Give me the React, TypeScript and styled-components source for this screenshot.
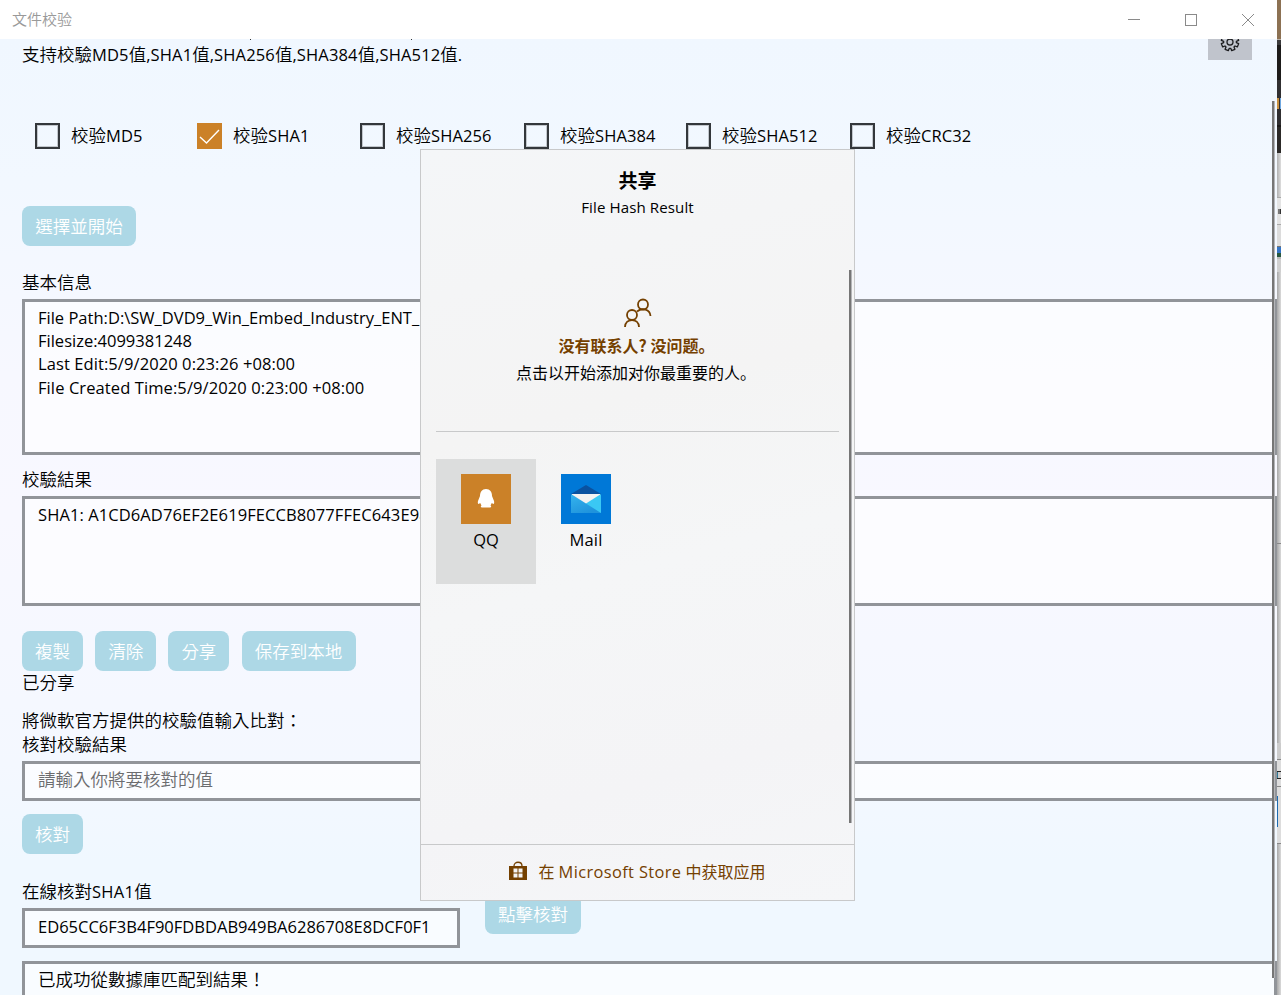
import React from 'react';
import styled, { createGlobalStyle } from 'styled-components';

const Global = createGlobalStyle`
  * { box-sizing: border-box; }
  body { margin: 0; overflow: hidden; }
`;

const Screen = styled.div`
  position: relative;
  display: flex;
  width: 1281px;
  height: 995px;
  overflow: hidden;
  font-family: "Open Sans", "Noto Sans CJK TC", sans-serif;
  font-size: 17.5px;
  color: #000;
`;
const Window = styled.main`
  width: 1277px;
  height: 995px;
  display: flex;
  flex-direction: column;
`;
const TitleBar = styled.header`
  height: 39px;
  flex: none;
  background: #fff;
  display: flex;
  align-items: center;
  justify-content: space-between;
  padding: 0 22px 2px 12px;
  font-family: "Noto Sans CJK SC", sans-serif;
  font-weight: 350;
  font-size: 15px;
  color: #999;
`;
const Controls = styled.div`
  display: flex;
  gap: 43px;
  svg { display: block; }
`;
const Page = styled.section`
  position: relative;
  flex: 1;
  min-height: 0;
  overflow: hidden;
  padding-left: 22px;
  display: flex;
  flex-direction: column;
  background: linear-gradient(to bottom, #f0f7ff 0%, #f2f8ff 15%, #f7f8ff 35%, #f8f8ff 50%, #f4f8ff 76%, #f0f8ff 86%, #f0f8ff 100%);
`;
const Intro = styled.div`
  flex: none;
  display: flex;
  justify-content: space-between;
  align-items: flex-start;
  height: 84px;
  padding-right: 25px;
`;
const Line = styled.div<{ $mt?: number; $h?: number }>`
  flex: none;
  margin-top: ${p => p.$mt ?? 0}px;
  height: ${p => p.$h ?? 24}px;
  line-height: ${p => (p.$h ?? 24) - 1}px;
  white-space: nowrap;
  font-weight: 350;
`;
const Latin = styled.span<{ $ls?: number; $size?: string }>`
  font-family: "Open Sans", sans-serif;
  font-weight: 400;
  font-size: ${p => p.$size ?? '0.945em'};
  letter-spacing: ${p => p.$ls ?? 0}px;
`;
const GearButton = styled.button`
  width: 44px;
  height: 21px;
  padding: 0;
  border: 0;
  background: #c0c4cc;
  overflow: hidden;
  svg { display: block; }
`;
const Checks = styled.div`
  flex: none;
  display: grid;
  grid-template-columns: 162px 163px 164px 162px 164px 162px;
  height: 26px;
  padding-left: 13px;
  font-family: "Noto Sans CJK SC", sans-serif;
`;
const Check = styled.label`
  display: flex;
  align-items: center;
  gap: 11px;
  height: 26px;
  white-space: nowrap;
  line-height: 24px;
  font-weight: 350;
  > span:last-child { padding-bottom: 2px; }
`;
const Box = styled.span<{ $on?: boolean }>`
  width: 25px;
  height: 26px;
  border: ${p => (p.$on ? '0' : '2px solid #33373b')};
  box-shadow: ${p => (p.$on ? 'none' : 'inset 0 0 0 1px #c2c7cd')};
  background: ${p => (p.$on ? '#cb8128' : 'transparent')};
  svg { display: block; }
`;
const Button = styled.button<{ $w: number }>`
  flex: none;
  width: ${p => p.$w}px;
  height: 40px;
  padding: 0;
  border: 0;
  border-radius: 8px;
  background: #add8e6;
  color: #fff;
  font: 350 17.5px/40px "Noto Sans CJK TC", sans-serif;
`;
const Row = styled.div<{ $mt: number }>`
  flex: none;
  display: flex;
  gap: 12.2px;
  margin-top: ${p => p.$mt}px;
`;
const Field = styled.div<{ $h: number; $mt: number; $muted?: boolean }>`
  flex: none;
  height: ${p => p.$h}px;
  margin-top: ${p => p.$mt}px;
  padding: 4px 13px;
  border: 3px solid #919499;
  background: rgba(255, 255, 255, 0.6);
  color: ${p => (p.$muted ? '#6b6c6f' : '#000')};
  line-height: 23.2px;
  white-space: nowrap;
  font-weight: 350;
  overflow: hidden;
`;
const OnlineRow = styled.div`
  flex: none;
  display: flex;
  gap: 25px;
  align-items: flex-start;
  margin-top: 26px;
`;
const OnlineColumn = styled.div`
  width: 438px;
`;
const OnlineButton = styled(Button)`
  margin-top: 14px;
`;
const Scrollbar = styled.div<{ $x: number; $y: number; $h: number }>`
  position: absolute;
  left: ${p => p.$x}px;
  top: ${p => p.$y}px;
  width: 3px;
  height: ${p => p.$h}px;
  background: linear-gradient(to right, #767676 2px, #b4b5b8 2px);
`;
const Descender = styled.i<{ $x: number }>`
  position: absolute;
  left: ${p => p.$x}px;
  top: 0;
  width: 1px;
  height: 1px;
  background: #333;
`;
const Desktop = styled.aside`
  width: 4px;
  display: flex;
  flex-direction: column;
`;
const Strip = styled.div<{ $h: number; $c: string }>`
  flex: none;
  height: ${p => p.$h}px;
  background: ${p => p.$c};
`;
const Dialog = styled.section`
  position: absolute;
  left: 420px;
  top: 149px;
  width: 435px;
  height: 752px;
  border: 1px solid #c8c9ca;
  background: linear-gradient(165deg, #f4f6f8, #f4f4f4 35%, #f5f6f7 55%, #f4f4f6 80%, #f5f6f8);
  display: flex;
  flex-direction: column;
  align-items: center;
  font-family: "Open Sans", "Noto Sans CJK SC", sans-serif;
  font-size: 16px;
`;
const DialogTitle = styled.h2`
  margin: 16px 0 0;
  font: 700 19px/28px "Noto Sans CJK SC", sans-serif;
`;
const Subtitle = styled.div`
  height: 26px;
  line-height: 26px;
`;
const People = styled.svg`
  margin: 78px 0 0 0;
  flex: none;
`;
const ContactTitle = styled.div`
  margin-top: 4px;
  height: 26px;
  font: 700 16px/26px "Noto Sans CJK SC", sans-serif;
  color: #744000;
  white-space: pre;
  padding-right: 2px;
`;
const ContactHint = styled.div`
  height: 28px;
  padding-right: 3px;
  font: 400 16px/28px "Noto Sans CJK SC", sans-serif;
`;
const Divider = styled.div`
  width: 403px;
  height: 1px;
  margin-top: 45px;
  background: #c8c9ca;
`;
const Targets = styled.div`
  display: flex;
  align-self: flex-start;
  margin: 27px 0 0 15px;
`;
const Target = styled.div<{ $active?: boolean }>`
  width: 100px;
  height: 125px;
  padding-top: 15px;
  display: flex;
  flex-direction: column;
  align-items: center;
  line-height: 32px;
  background: ${p => (p.$active ? '#dcdddd' : 'transparent')};
  svg { display: block; }
`;
const Footer = styled.footer`
  margin-top: auto;
  width: 100%;
  height: 56px;
  padding-bottom: 3px;
  border-top: 1px solid #c8c9ca;
  display: flex;
  align-items: center;
  justify-content: center;
  gap: 11px;
  color: #744000;
  white-space: nowrap;
  svg { margin-top: -1px; }
`;

const checks = [
  ['MD5', false], ['SHA1', true], ['SHA256', false],
  ['SHA384', false], ['SHA512', false], ['CRC32', false],
] as const;

const gearPath = () => {
  const pts: string[] = [];
  for (let i = 0; i < 8; i++) {
    const base = (i * Math.PI) / 4 + Math.PI / 8;
    [[-0.28, 6.4], [-0.2, 8.8], [0.2, 8.8], [0.28, 6.4]].forEach(([a, r]) => {
      pts.push(`${(r * Math.cos(base + a)).toFixed(2)} ${(r * Math.sin(base + a)).toFixed(2)}`);
    });
  }
  return `M${pts.join('L')}Z`;
};

const strips: [number, string][] = [
  [39, '#8c7153'], [1, '#b8b0a8'], [5, '#3a3a3c'], [35, '#1d1b1a'], [18, '#302f31'],
  [11, 'linear-gradient(to right,#c89040 2px,#302f31 2px,#302f31 3px,#70a8e0 3px)'], [16, '#302f31'], [2, '#1d1b1a'], [26, '#2c2a28'],
  [44, 'linear-gradient(to right,#b0b0b0,#dedede)'], [1, '#aaa'], [11, '#e4e4e4'],
  [5, 'linear-gradient(to right,#e4e4e4 1px,#777 1px,#777 3px,#333 3px)'], [10, '#e4e4e4'], [1, '#aaa'],
  [21, '#dcdcdc'], [1, '#777'], [6, '#3575c5'], [4, '#285840'], [2, '#bbb'], [13, '#d0d0d0'],
  [271, 'linear-gradient(to right,#a8a8a8,#dadada)'], [1, '#888'], [199, 'linear-gradient(to right,#a8a8a8,#dadada)'],
  [16, '#ccc'], [1, '#888'], [11, '#ddd'], [1, '#222'], [6, 'linear-gradient(to right,#317a98 1px,#ccc 1px)'], [1, '#222'], [7, '#ddd'], [1, '#888'],
  [9, '#ddd'], [31, 'linear-gradient(to right,#1d6bb0 1px,#ddd 1px)'], [16, '#ddd'], [1, '#888'],
  [160, 'linear-gradient(to right,#a8a8a8,#dadada)'],
];

export default function App() {
  return (
    <Screen>
      <Global />
      <Window>
        <TitleBar>
          <span>文件校验</span>
          <Controls>
            <svg width="14" height="14"><path d="M1 7.5h12" stroke="#8a8a8a" /></svg>
            <svg width="14" height="14"><rect x="1.5" y="2.5" width="11" height="11" fill="none" stroke="#8a8a8a" /></svg>
            <svg width="14" height="14"><path d="M1 2l12 12M13 2L1 14" stroke="#8a8a8a" /></svg>
          </Controls>
        </TitleBar>
        <Page>
          <Descender $x={250} />
          <Descender $x={411} />
          <Intro>
            <Line $mt={4}>
              支持校驗<Latin $ls={0.13}>MD5</Latin>值<Latin $ls={0.13}>,SHA1</Latin>值<Latin $ls={0.13}>,SHA256</Latin>值<Latin $ls={0.13}>,SHA384</Latin>值<Latin $ls={0.13}>,SHA512</Latin>值<Latin>.</Latin>
            </Line>
            <GearButton aria-label="設置">
              <svg width="44" height="21" viewBox="-22 -3 44 21" fill="none" stroke="#1c1d1f" strokeWidth="1.3">
                <path d={gearPath()} strokeLinejoin="round" />
                <circle r="3" />
              </svg>
            </GearButton>
          </Intro>
          <Checks>
            {checks.map(([name, on]) => (
              <Check key={name}>
                <Box $on={on}>
                  {on && <svg width="25" height="26"><path d="M3 14l6.500 6L22 7" fill="none" stroke="#fff" strokeWidth="1.4" /></svg>}
                </Box>
                <span>校验<Latin $ls={0.1}>{name}</Latin></span>
              </Check>
            ))}
          </Checks>
          <Row $mt={57}><Button $w={114}>選擇並開始</Button></Row>
          <Line $mt={25}>基本信息</Line>
          <Field $h={156} $mt={4}>
            <Latin as="div">File Path:D:\SW_DVD9_Win_Embed_Industry_ENT_LTSC</Latin>
            <Latin as="div">Filesize:4099381248</Latin>
            <Latin as="div" $ls={0.08}>Last Edit:5/9/2020 0:23:26 +08:00</Latin>
            <Latin as="div" $ls={0.09}>File Created Time:5/9/2020 0:23:00 +08:00</Latin>
          </Field>
          <Line $mt={13}>校驗結果</Line>
          <Field $h={110} $mt={4}><Latin as="div" $ls={0.08}>SHA1: A1CD6AD76EF2E619FECCB8077FFEC643E98</Latin></Field>
          <Row $mt={25}>
            <Button $w={61}>複製</Button>
            <Button $w={61}>清除</Button>
            <Button $w={61}>分享</Button>
            <Button $w={114}>保存到本地</Button>
          </Row>
          <Line>已分享</Line>
          <Line $mt={14}>將微軟官方提供的校驗值輸入比對：</Line>
          <Line>核對校驗結果</Line>
          <Field $h={40} $mt={4} $muted>請輸入你將要核對的值</Field>
          <Row $mt={13}><Button $w={61}>核對</Button></Row>
          <OnlineRow>
            <OnlineColumn>
              <Line>在線核對<Latin $ls={0.3}>SHA1</Latin>值</Line>
              <Field $h={40} $mt={4}><Latin as="div">ED65CC6F3B4F90FDBDAB949BA6286708E8DCF0F1</Latin></Field>
            </OnlineColumn>
            <OnlineButton $w={96}>點擊核對</OnlineButton>
          </OnlineRow>
          <Field $h={60} $mt={13}>已成功從數據庫匹配到結果！</Field>
          <Scrollbar $x={1272} $y={62} $h={877} />
        </Page>
      </Window>
      <Desktop>{strips.map(([h, c], i) => <Strip key={i} $h={h} $c={c} />)}</Desktop>
      <Dialog>
        <DialogTitle>共享</DialogTitle>
        <Subtitle><Latin $ls={0.08}>File Hash Result</Latin></Subtitle>
        <People width="28" height="30" fill="none" stroke="#744000" strokeWidth="1.8">
          <circle cx="19" cy="6.5" r="5" />
          <circle cx="8" cy="17" r="5" />
          <path d="M1 29C1.300 19.700 14.700 19.700 15 29M13 13.500C18 9.500 26 11 26.500 18" />
        </People>
        <ContactTitle>没有联系人? 没问题。</ContactTitle>
        <ContactHint>点击以开始添加对你最重要的人。</ContactHint>
        <Divider />
        <Targets>
          <Target $active>
            <svg width="50" height="50">
              <rect width="50" height="50" fill="#cb8128" />
              <path d="M25 15c-4 0-6 3-6 7l-2 5c-.5 2 0 3 .7 3l1.500-1 1.300 2.500c-1 .5-1 2 .5 2h8c1.500 0 1.500-1.500.5-2l1.300-2.500 1.500 1c.700 0 1.200-1 .7-3l-2-5c0-4-2-7-6-7z" fill="#fff" />
            </svg>
            <Latin $size="16.5px">QQ</Latin>
          </Target>
          <Target>
            <svg width="50" height="50">
              <defs>
                <linearGradient id="flap" x1="0" y1="0" x2="0.6" y2="1">
                  <stop offset="0" stopColor="#35b4ee" /><stop offset="1" stopColor="#1f93dc" />
                </linearGradient>
              </defs>
              <rect width="50" height="50" fill="#0078d7" />
              <path d="M10 20l15-9 15 9v3H10z" fill="#0a52a0" />
              <path d="M11 20h28v10H11z" fill="#f2f2f2" />
              <path d="M40 20v19H20l5-9.500z" fill="#3ac8f4" />
              <path d="M10 20l30 19H10z" fill="url(#flap)" />
            </svg>
            <Latin $size="16.5px" $ls={0.2}>Mail</Latin>
          </Target>
        </Targets>
        <Footer>
          <svg width="18" height="19" fill="none" stroke="#744000">
            <path d="M0 5h18v14H0z" fill="#744000" stroke="none" />
            <path d="M5 5c0-5 8-5 8 0" strokeWidth="1.300" />
            <path d="M4.500 7.500H8.500v4H4.500zM9.500 7.500H13.500v4H9.500zM4.500 12.500H8.500v4H4.500zM9.500 12.500H13.500v4H9.500z" fill="#f5f5f5" stroke="none" />
          </svg>
          <span>在 <Latin $size="16.4px" $ls={0.38}>Microsoft Store</Latin> 中获取应用</span>
        </Footer>
        <Scrollbar $x={428} $y={120} $h={553} />
      </Dialog>
    </Screen>
  );
}
